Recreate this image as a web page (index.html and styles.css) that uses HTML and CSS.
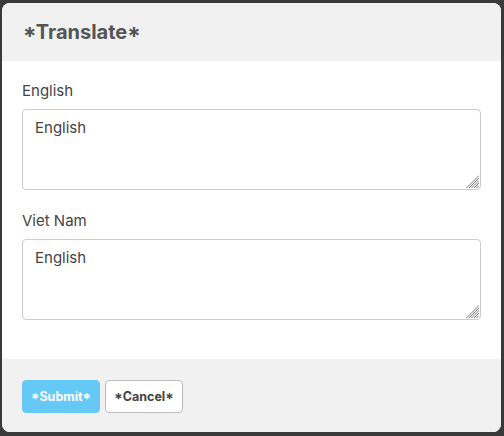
FILE: index.html
```html
<!DOCTYPE html>
<html>
<head>
<meta charset="utf-8">
<link rel="stylesheet" href="styles.css">
</head>
<body>
<div class="modal">
  <div class="modal-header">
    <h1 class="modal-title">*Translate*</h1>
  </div>
  <div class="modal-body">
    <div class="field">
      <label class="field-label">English</label>
      <div class="input-wrap">
        <textarea class="field-input">English</textarea>
        <svg class="resizer" width="13" height="13" viewBox="0 0 13 13"><path d="M13 0.5L0.5 13M13 3L3 13M13 5.5L5.5 13M13 8L8 13M13 10.5L10.5 13" stroke="#7a7a7a" stroke-width="1" fill="none"/></svg>
      </div>
    </div>
    <div class="field">
      <label class="field-label">Viet Nam</label>
      <div class="input-wrap">
        <textarea class="field-input">English</textarea>
        <svg class="resizer" width="13" height="13" viewBox="0 0 13 13"><path d="M13 0.5L0.5 13M13 3L3 13M13 5.5L5.5 13M13 8L8 13M13 10.5L10.5 13" stroke="#7a7a7a" stroke-width="1" fill="none"/></svg>
      </div>
    </div>
  </div>
  <div class="modal-footer">
    <button class="btn btn-primary">*Submit*</button>
    <button class="btn btn-default">*Cancel*</button>
  </div>
</div>
</body>
</html>
```

FILE: styles.css
```css
html, body {
  margin: 0;
  padding: 0;
  height: 100%;
}
body {
  background: #3a3a3a;
  font-family: Inter, "Noto Sans", sans-serif;
  font-feature-settings: "case" 1;
  padding: 3px 3px 4px 2px;
  box-sizing: border-box;
}
.modal {
  height: 100%;
  background: #fff;
  border-radius: 8px;
  overflow: hidden;
  display: flex;
  flex-direction: column;
}
.modal-header {
  background: #f1f1f1;
  height: 58px;
  display: flex;
  align-items: center;
  padding: 0 20px 0 21px;
  flex: none;
}
.modal-title {
  margin: 0;
  font-size: 20px;
  font-weight: 700;
  color: #555;
}
.modal-body {
  padding: 20px 20px 0 20px;
  flex: 1;
  display: flex;
  flex-direction: column;
  gap: 21px;
}
.field {
  display: flex;
  flex-direction: column;
}
.field-label {
  font-size: 15px;
  color: #444;
  line-height: 20px;
  margin-bottom: 8px;
}
.input-wrap {
  position: relative;
  display: flex;
}
.field-input {
  flex: 1;
  height: 81px;
  box-sizing: border-box;
  border: 1px solid #ccc;
  border-radius: 4px;
  padding: 8px 12px;
  font-family: Inter, "Noto Sans", sans-serif;
  font-size: 15px;
  color: #444;
  resize: none;
  line-height: 20px;
}
.resizer {
  position: absolute;
  right: 2px;
  bottom: 2px;
  pointer-events: none;
}
.modal-footer {
  background: #f1f1f1;
  height: 73px;
  flex: none;
  display: flex;
  align-items: flex-start;
  padding: 21px 20px 0 20px;
  box-sizing: border-box;
  gap: 5px;
}
.btn {
  width: 78px;
  height: 33px;
  border-radius: 4px;
  font-family: Inter, "Noto Sans", sans-serif;
  font-feature-settings: "case" 1;
  font-size: 12.5px;
  font-weight: 700;
  padding: 0;
  cursor: pointer;
}
.btn-primary {
  background: #66c8f4;
  color: #fff;
  border: 1px solid #66c8f4;
}
.btn-default {
  background: #fff;
  color: #444;
  border: 1px solid #bbb;
}
```
